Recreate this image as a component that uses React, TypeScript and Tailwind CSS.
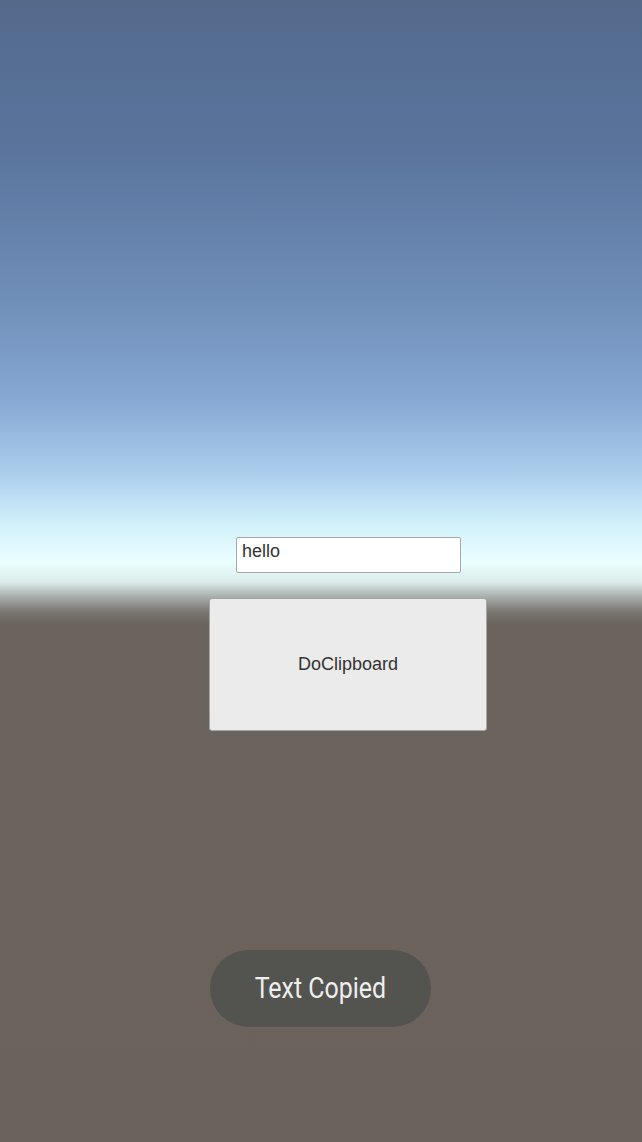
export default function App() {
  return (
    <div className="w-[642px] h-[1142px] overflow-hidden flex flex-col bg-[linear-gradient(to_bottom,#536a8b_0px,#5a749d_150px,#6f8eb8_300px,#86a8d3_400px,#a9cbec_470px,#d2f1fb_525px,#eaffff_562px,#dcecea_582px,#a9b1ae_596px,#7a7570_612px,#6b635d_625px,#6b625c_1142px)]">
      <div className="mt-[537px] ml-[236px] w-[225px] h-[36px] bg-white border border-[#a3a9ab] rounded-[2px] px-[5px] pt-[2px] text-[18px] leading-[22px] text-[#333333] font-['Liberation_Sans',Arial,sans-serif]">
        hello
      </div>
      <div className="mt-[25px] ml-[209px] w-[278px] h-[133px] bg-[#ebebeb] border border-[#a6a6a6] rounded-[3px] flex items-center justify-center text-[18px] text-[#333333] font-['Liberation_Sans',Arial,sans-serif]">
        DoClipboard
      </div>
      <div className="mt-[219px] ml-[210px] w-[221px] h-[77px] rounded-full bg-[#53544f] flex items-center justify-center">
        <span className="text-[29px] leading-none text-[#eeeeee] font-['Roboto',sans-serif] scale-x-[0.86] whitespace-nowrap">
          Text Copied
        </span>
      </div>
    </div>
  );
}
